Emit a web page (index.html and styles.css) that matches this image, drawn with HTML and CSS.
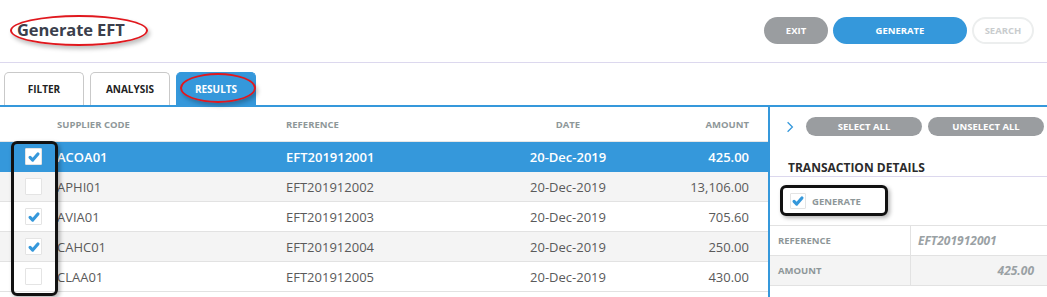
FILE: index.html
```html
<!DOCTYPE html>
<html>
<head>
<meta charset="utf-8">
<link rel="stylesheet" href="styles.css">
</head>
<body>
<div class="page">
  <header class="topbar">
    <h1 class="title">Generate EFT</h1>
    <div class="actions">
      <button class="btn btn-grey btn-exit">EXIT</button>
      <button class="btn btn-blue btn-gen">GENERATE</button>
      <button class="btn btn-ghost btn-search">SEARCH</button>
    </div>
  </header>
  <nav class="tabs">
    <div class="tab">FILTER</div>
    <div class="tab">ANALYSIS</div>
    <div class="tab tab-active">RESULTS</div>
  </nav>
  <main class="content">
    <section class="grid-panel">
      <div class="row head">
        <div class="c-chk"></div>
        <div class="c-code">SUPPLIER CODE</div>
        <div class="c-ref">REFERENCE</div>
        <div class="c-date">DATE</div>
        <div class="c-amt">AMOUNT</div>
      </div>
      <div class="row selected">
        <div class="c-chk"><span class="box checked"><svg viewBox="0 0 16 16"><path d="M3.5 8.5 L6.5 11.5 L12.5 4.5"/></svg></span></div>
        <div class="c-code">ACOA01</div>
        <div class="c-ref">EFT201912001</div>
        <div class="c-date">20-Dec-2019</div>
        <div class="c-amt">425.00</div>
      </div>
      <div class="row alt">
        <div class="c-chk"><span class="box"></span></div>
        <div class="c-code">APHI01</div>
        <div class="c-ref">EFT201912002</div>
        <div class="c-date">20-Dec-2019</div>
        <div class="c-amt">13,106.00</div>
      </div>
      <div class="row">
        <div class="c-chk"><span class="box checked"><svg viewBox="0 0 16 16"><path d="M3.5 8.5 L6.5 11.5 L12.5 4.5"/></svg></span></div>
        <div class="c-code">AVIA01</div>
        <div class="c-ref">EFT201912003</div>
        <div class="c-date">20-Dec-2019</div>
        <div class="c-amt">705.60</div>
      </div>
      <div class="row alt">
        <div class="c-chk"><span class="box checked"><svg viewBox="0 0 16 16"><path d="M3.5 8.5 L6.5 11.5 L12.5 4.5"/></svg></span></div>
        <div class="c-code">CAHC01</div>
        <div class="c-ref">EFT201912004</div>
        <div class="c-date">20-Dec-2019</div>
        <div class="c-amt">250.00</div>
      </div>
      <div class="row">
        <div class="c-chk"><span class="box"></span></div>
        <div class="c-code">CLAA01</div>
        <div class="c-ref">EFT201912005</div>
        <div class="c-date">20-Dec-2019</div>
        <div class="c-amt">430.00</div>
      </div>
    </section>
    <aside class="side">
      <div class="side-top">
        <svg class="chev" viewBox="0 0 10 16"><path d="M2 2 L8 8 L2 14"/></svg>
        <button class="pill">SELECT ALL</button>
        <button class="pill">UNSELECT ALL</button>
      </div>
      <h2 class="side-title">TRANSACTION DETAILS</h2>
      <div class="gen-row">
        <span class="box checked small"><svg viewBox="0 0 16 16"><path d="M3.5 8.5 L6.5 11.5 L12.5 4.5"/></svg></span>
        <span class="gen-label">GENERATE</span>
      </div>
      <div class="det-row">
        <div class="det-k">REFERENCE</div>
        <div class="det-v">EFT201912001</div>
      </div>
      <div class="det-row alt">
        <div class="det-k">AMOUNT</div>
        <div class="det-v num">425.00</div>
      </div>
    </aside>
  </main>
  <div class="ann ann-title"></div>
  <div class="ann ann-tab"></div>
  <div class="ann ann-checks"></div>
  <div class="ann ann-gen"></div>
</div>
</body>
</html>
```
FILE: styles.css
```css
* { box-sizing: border-box; }
html, body { margin: 0; padding: 0; background: #fff; }
body { font-family: "Open Sans", "Noto Sans", sans-serif; color: #555; }
.page { position: relative; width: 1047px; height: 297px; overflow: hidden; }

.topbar {
  height: 63px;
  display: flex;
  align-items: flex-start;
  justify-content: space-between;
  border-bottom: 1px solid #dcd8ee;
}
.title {
  margin: 18px 0 0 17px;
  font-size: 16.5px;
  font-weight: 700;
  color: #3b3f4c;
  line-height: 24px;
  letter-spacing: -0.1px;
}
.actions { display: flex; gap: 5px; margin: 17px 13px 0 0; }
.btn {
  height: 27px;
  border-radius: 14px;
  border: 0;
  font-family: inherit;
  font-size: 9.5px;
  font-weight: 700;
  color: #fff;
  padding: 0;
}
.btn-grey { background: #9a9da0; }
.btn-exit { width: 64px; }
.btn-blue { background: #3598db; }
.btn-gen { width: 134px; }
.btn-ghost { background: #fff; border: 2px solid #eceeee; color: #c9ccce; }
.btn-search { width: 62px; }

.tabs {
  display: flex;
  gap: 6px;
  padding: 9px 0 0 4px;
  height: 42px;
  align-items: flex-end;
}
.tab {
  width: 80px;
  height: 33px;
  border: 1px solid #c9c9c9;
  border-bottom: 0;
  border-radius: 5px 5px 0 0;
  display: flex;
  align-items: center;
  justify-content: center;
  font-size: 10px;
  font-weight: 700;
  color: #222;
}
.tab-active { background: #3598db; border-color: #3598db; color: #fff; }

.content {
  display: flex;
  border-top: 2px solid #3598db;
  height: 192px;
}
.grid-panel {
  width: 770px;
  border-right: 2px solid #3598db;
}
.row {
  display: flex;
  align-items: center;
  height: 30px;
  border-bottom: 1px solid #e2e2e2;
  font-size: 13px;
  color: #5a5a5a;
}
.row.head {
  height: 35px;
  font-size: 9.5px;
  font-weight: 700;
  color: #8e9799;
  border-bottom: 1px solid #e6e6e6;
}
.row.alt { background: #f4f4f4; }
.row.selected { background: #3598db; color: #fff; font-weight: 600; border-bottom-color: #3598db; }
.c-chk { width: 57px; display: flex; padding-left: 25px; }
.c-code { width: 229px; }
.c-ref { width: 209px; }
.c-date { width: 146px; text-align: center; }
.c-amt { width: 108px; text-align: right; }

.box {
  width: 17px;
  height: 17px;
  border: 1px solid #e4e4e4;
  background: #fff;
  display: inline-flex;
  align-items: center;
  justify-content: center;
  border-radius: 1px;
}
.box svg { width: 14px; height: 14px; }
.box svg path { fill: none; stroke: #3598db; stroke-width: 3.6; stroke-linecap: round; stroke-linejoin: round; }
.box.small { width: 16px; height: 16px; }

.side { flex: 1; }
.side-top {
  display: flex;
  align-items: center;
  gap: 6px;
  padding: 10px 0 0 16px;
  height: 29px;
}
.chev { width: 8px; height: 14px; margin-right: 6px; }
.chev path { fill: none; stroke: #3598db; stroke-width: 1.6; }
.pill {
  height: 19px;
  width: 116px;
  border: 0;
  border-radius: 10px;
  background: #9a9da0;
  color: #fff;
  font-family: inherit;
  font-size: 9.5px;
  font-weight: 700;
  padding: 0;
}
.side-title {
  margin: 0;
  padding: 23px 0 0 18px;
  font-size: 12px;
  font-weight: 700;
  color: #2b2b2b;
  height: 41px;
  line-height: 17px;
  border-bottom: 1px solid #dcd8ee;
}
.gen-row {
  display: flex;
  align-items: center;
  gap: 6px;
  height: 49px;
  padding-left: 20px;
  border-bottom: 1px solid #e2e2e2;
}
.gen-label { font-size: 9.5px; font-weight: 700; color: #8e9799; }
.det-row {
  display: flex;
  height: 30px;
  border-bottom: 1px solid #e2e2e2;
  align-items: stretch;
}
.det-row.alt { background: #f4f4f4; }
.det-k {
  width: 141px;
  border-right: 1px solid #e2e2e2;
  display: flex;
  align-items: center;
  padding-left: 8px;
  font-size: 9.5px;
  font-weight: 700;
  color: #8e9799;
}
.det-v {
  flex: 1;
  display: flex;
  align-items: center;
  padding: 0 13px 0 7px;
  font-size: 12px;
  font-weight: 700;
  font-style: italic;
  color: #9aa1a4;
}
.det-v.num { justify-content: flex-end; }

.ann { position: absolute; pointer-events: none; }
.ann-title {
  left: 10px; top: 15px; width: 138px; height: 31px;
  border: 2.5px solid #e0181e;
  border-radius: 50%;
  box-shadow: 2px 3px 4px rgba(0,0,0,0.25);
}
.ann-tab {
  left: 180px; top: 73px; width: 76px; height: 30px;
  border: 2.5px solid #e0181e;
  border-radius: 50%;
  box-shadow: 2px 3px 4px rgba(0,0,0,0.25);
}
.ann-checks {
  left: 11px; top: 141px; width: 47px; height: 155px;
  border: 3px solid #111;
  border-radius: 6px;
  box-shadow: 2px 2px 4px rgba(0,0,0,0.3);
}
.ann-gen {
  left: 780px; top: 185px; width: 108px; height: 31px;
  border: 3px solid #111;
  border-radius: 6px;
  box-shadow: 2px 2px 4px rgba(0,0,0,0.3);
}
```
